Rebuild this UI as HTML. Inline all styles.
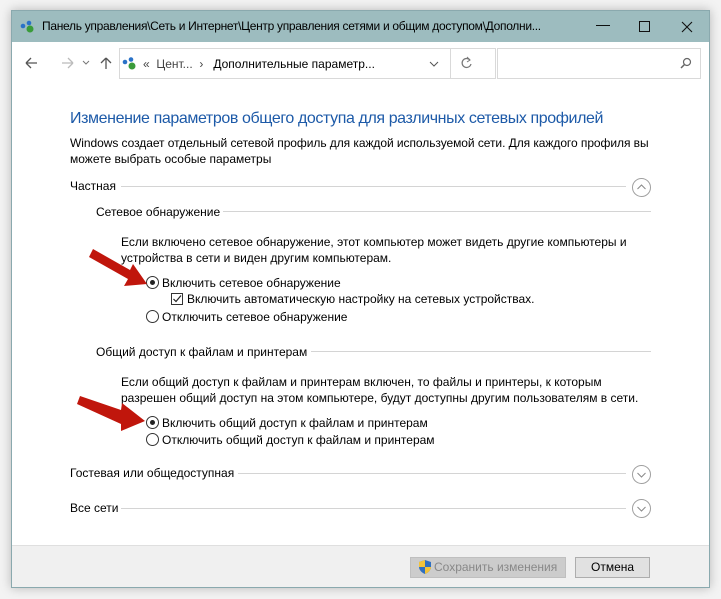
<!DOCTYPE html>
<html><head><meta charset="utf-8"><style>
*{margin:0;padding:0;box-sizing:border-box}
body{width:721px;height:599px;background:#f3f3f3;position:relative;overflow:hidden;font-family:"Liberation Sans","DejaVu Sans",sans-serif;font-size:12px;color:#000}
.win{position:absolute;left:11px;top:10px;width:699px;height:578px;background:#fff;border:1px solid #8aa9ae;box-shadow:0 0 10px rgba(0,0,0,.25)}
.t{position:absolute;white-space:nowrap;line-height:14px}
.ln{position:absolute;height:1px;background:#d4d4d4}
.chev{position:absolute;width:19px;height:19px;border:1px solid #a0a0a0;border-radius:50%}
.rad{position:absolute;width:13px;height:13px;border:1px solid #333;border-radius:50%;background:#fff}
.rad.on::after{content:"";position:absolute;left:3px;top:3px;width:5px;height:5px;border-radius:50%;background:#222}
</style></head><body>
<div class="win">
 <div style="position:absolute;left:0;top:0;width:697px;height:31px;background:#9dbcbf"></div>
 <svg style="position:absolute;left:8px;top:9px" width="16" height="14"><circle cx="3" cy="6" r="2.3" fill="#2a72c8"/><circle cx="9" cy="3" r="2.3" fill="#2a72c8"/><circle cx="10" cy="9" r="3.5" fill="#3a9b3a"/></svg>
 <div class="t" style="left:30px;top:8px;font-size:12px;letter-spacing:-0.3px">Панель управления\Сеть и Интернет\Центр управления сетями и общим доступом\Дополни...</div>
 <div class="t" style="left:584px;top:6px;font-size:14px">&#8212;</div>
 <div style="position:absolute;left:627px;top:10px;width:11px;height:11px;border:1px solid #111"></div>
 <svg style="position:absolute;left:669px;top:10px" width="12" height="12"><path d="M1 1L11 11M11 1L1 11" stroke="#111" stroke-width="1.1"/></svg>
 <!-- nav -->
 <svg style="position:absolute;left:12px;top:45px" width="90" height="14"><path d="M2 7H13M2 7L7 2M2 7L7 12" stroke="#555" fill="none" stroke-width="1.3"/><path d="M38 7H49M49 7L44 2M49 7L44 12" stroke="#bbb" fill="none" stroke-width="1.3"/><path d="M59 5L62 8L65 5" stroke="#777" fill="none"/><path d="M94 13V2M94 2L89 7M94 2L99 7" stroke="#555" fill="none" stroke-width="1.3" transform="translate(-12,0)"/></svg>
 <div style="position:absolute;left:107px;top:37px;width:377px;height:31px;border:1px solid #d9d9d9"></div>
 <div style="position:absolute;left:438px;top:37px;width:1px;height:31px;background:#d9d9d9"></div>
 <svg style="position:absolute;left:110px;top:46px" width="16" height="14"><circle cx="3" cy="5" r="2.3" fill="#2a72c8"/><circle cx="9" cy="2.5" r="2.3" fill="#2a72c8"/><circle cx="10" cy="9" r="3.5" fill="#3a9b3a"/></svg>
 <div class="t" style="left:131px;top:46px;color:#444">«&nbsp; Цент... &nbsp;›&nbsp;&nbsp; <span style="color:#000">Дополнительные параметр...</span></div>
 <svg style="position:absolute;left:417px;top:50px" width="10" height="6"><path d="M1 1L5 5L9 1" stroke="#555" fill="none"/></svg>
 <svg style="position:absolute;left:449px;top:45px" width="12" height="14"><path d="M9 4A4.5 4.5 0 1 0 10 8" stroke="#777" fill="none" stroke-width="1.2"/><path d="M6 1L9 4L6 6" stroke="#777" fill="none"/></svg>
 <div style="position:absolute;left:485px;top:37px;width:204px;height:31px;border:1px solid #d9d9d9"></div>
 <svg style="position:absolute;left:668px;top:46px" width="12" height="12"><circle cx="7" cy="5" r="3.5" stroke="#666" fill="none" stroke-width="1.2"/><path d="M4.5 7.5L1 11" stroke="#666" stroke-width="1.5"/></svg>
 <!-- content -->
 <div class="t" style="left:58px;top:98px;font-size:16px;line-height:20px;color:#1d5aa8;letter-spacing:-0.4px">Изменение параметров общего доступа для различных сетевых профилей</div>
 <div class="t" style="left:58px;top:125px;letter-spacing:-0.06px">Windows создает отдельный сетевой профиль для каждой используемой сети. Для каждого профиля вы</div>
 <div class="t" style="left:58px;top:141px">можете выбрать особые параметры</div>
 <div class="t" style="left:58px;top:168px">Частная</div><div class="ln" style="left:109px;top:175px;width:505px"></div>
 <div class="chev" style="left:620px;top:167px"><svg width="17" height="17"><path d="M4.5 10L8.5 6L12.5 10" stroke="#888" fill="none"/></svg></div>
 <div class="t" style="left:84px;top:194px">Сетевое обнаружение</div><div class="ln" style="left:211px;top:200px;width:428px"></div>
 <div class="t" style="left:109px;top:224px">Если включено сетевое обнаружение, этот компьютер может видеть другие компьютеры и</div>
 <div class="t" style="left:109px;top:240px">устройства в сети и виден другим компьютерам.</div>
 <div class="rad on" style="left:134px;top:265px"></div><div class="t" style="left:150px;top:265px">Включить сетевое обнаружение</div>
 <div style="position:absolute;left:159px;top:282px;width:12px;height:12px;border:1px solid #333"><svg width="10" height="10" style="position:absolute;left:0;top:0"><path d="M1.5 5L4 7.5L9 1.5" stroke="#222" fill="none" stroke-width="1.2"/></svg></div>
 <div class="t" style="left:175px;top:281px">Включить автоматическую настройку на сетевых устройствах.</div>
 <div class="rad" style="left:134px;top:299px"></div><div class="t" style="left:150px;top:299px">Отключить сетевое обнаружение</div>
 <div class="t" style="left:84px;top:334px">Общий доступ к файлам и принтерам</div><div class="ln" style="left:299px;top:340px;width:340px"></div>
 <div class="t" style="left:109px;top:364px">Если общий доступ к файлам и принтерам включен, то файлы и принтеры, к которым</div>
 <div class="t" style="left:109px;top:380px">разрешен общий доступ на этом компьютере, будут доступны другим пользователям в сети.</div>
 <div class="rad on" style="left:134px;top:405px"></div><div class="t" style="left:150px;top:405px">Включить общий доступ к файлам и принтерам</div>
 <div class="rad" style="left:134px;top:422px"></div><div class="t" style="left:150px;top:422px">Отключить общий доступ к файлам и принтерам</div>
 <div class="t" style="left:58px;top:455px">Гостевая или общедоступная</div><div class="ln" style="left:226px;top:462px;width:388px"></div>
 <div class="chev" style="left:620px;top:454px"><svg width="17" height="17"><path d="M4.5 7L8.5 11L12.5 7" stroke="#888" fill="none"/></svg></div>
 <div class="t" style="left:58px;top:490px">Все сети</div><div class="ln" style="left:109px;top:497px;width:505px"></div>
 <div class="chev" style="left:620px;top:488px"><svg width="17" height="17"><path d="M4.5 7L8.5 11L12.5 7" stroke="#888" fill="none"/></svg></div>
 <!-- footer -->
 <div style="position:absolute;left:0;top:534px;width:697px;height:42px;background:#f0f0f0;border-top:1px solid #dfdfdf"></div>
 <div style="position:absolute;left:398px;top:546px;width:156px;height:21px;background:#ccc;border:1px solid #bfbfbf"></div>
 <svg style="position:absolute;left:406px;top:548px" width="14" height="16"><path d="M7 1L13 3V8C13 11 10 14 7 15C4 14 1 11 1 8V3Z" fill="#2f6fc0"/><path d="M7 1V8H1V3ZM7 8H13C13 11 10 14 7 15Z" fill="#f3c33a"/></svg>
 <div class="t" style="left:422px;top:549px;color:#888">Сохранить изменения</div>
 <div style="position:absolute;left:563px;top:546px;width:75px;height:21px;background:#e1e1e1;border:1px solid #adadad"></div>
 <div class="t" style="left:579px;top:549px">Отмена</div>
</div>
<svg style="position:absolute;left:0;top:0" width="721" height="599"><g fill="#c0160c"><path d="M89 257L93 249L130 270L133 264L147 284L124 286L128 279Z"/><path d="M77 404L80 396L121 410L122 403L145 421L121 431L121 424Z"/></g></svg>
</body></html>
